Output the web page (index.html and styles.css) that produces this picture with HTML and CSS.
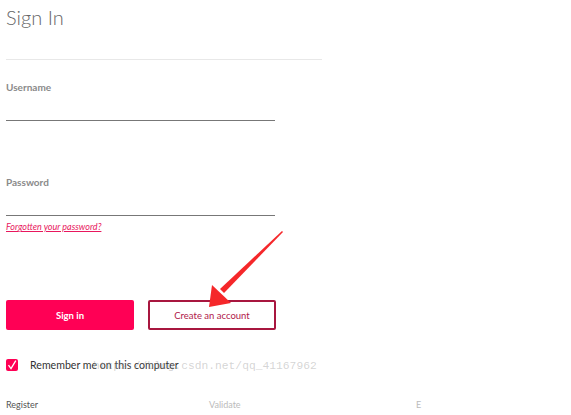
FILE: index.html
```html
<!DOCTYPE html>
<html lang="en">
<head>
    <meta charset="UTF-8">
    <meta name="viewport" content="width=device-width, initial-scale=1.0">
    <title>Sign In</title>
    <link rel="stylesheet" href="styles.css">
</head>
<body>
    <div class="page">
        <div class="header">
            <h1>Sign In</h1>
        </div>

        <form class="login-form">
            <label class="field-label" for="username">Username</label>
            <input type="text" id="username" class="field-input">

            <label class="field-label password-label" for="password">Password</label>
            <input type="password" id="password" class="field-input">

            <a href="#" class="forgot-link">Forgotten your password?</a>

            <div class="actions">
                <button type="button" class="btn btn-primary">Sign in</button>
                <button type="button" class="btn btn-outline">Create an account</button>
            </div>

            <div class="remember">
                <span class="checkbox">
                    <svg width="12" height="12" viewBox="0 0 12 12">
                        <path d="M2.5 6.2 L5 9.6 L9.8 1.6" fill="none" stroke="#fff" stroke-width="1.3"/>
                    </svg>
                </span>
                <span class="remember-text">Remember me on this computer</span>
            </div>
        </form>

        <div class="steps">
            <span class="step step-active">Register</span>
            <span class="step step-mid">Validate</span>
            <span class="step step-last">E</span>
        </div>
    </div>

    <!-- annotation layered over the screenshot -->
    <svg class="arrow" width="571" height="415" viewBox="0 0 571 415">
        <polygon points="282,231 283,232 224,293 220,289" fill="#f5272a"/>
        <polygon points="209,307 212,285 231,303" fill="#f5272a"/>
    </svg>
    <div class="watermark">https://blog.csdn.net/qq_41167962</div>
</body>
</html>
```

FILE: styles.css
```css
body {
    margin: 0;
    font-family: Lato, "Open Sans", sans-serif;
    background-color: #fff;
    width: 571px;
    height: 415px;
    overflow: hidden;
}

.page {
    padding-left: 6px;
}

.header {
    width: 316px;
    height: 59px;
    border-bottom: 1.5px solid #e8e8e8;
}

h1 {
    margin: 0;
    padding-top: 3px;
    font-size: 20px;
    line-height: 28px;
    font-weight: 300;
    color: #666;
}

.login-form {
    display: flex;
    flex-direction: column;
    align-items: flex-start;
    padding-top: 20px;
}

.field-label {
    font-size: 10px;
    line-height: 14px;
    font-weight: 700;
    color: #8a8a8a;
}

.password-label {
    margin-top: 54px;
}

.field-input {
    width: 269px;
    height: 26px;
    box-sizing: content-box;
    margin: 0;
    padding: 0;
    border: none;
    border-bottom: 1px solid #777;
    outline: none;
}

.forgot-link {
    margin-top: 5px;
    font-size: 9px;
    line-height: 12px;
    font-style: italic;
    color: #e8175d;
}

.actions {
    display: flex;
    gap: 14px;
    margin-top: 67px;
}

.btn {
    width: 128px;
    height: 30px;
    font-family: Lato, sans-serif;
    font-size: 9.5px;
    border-radius: 2px;
    cursor: pointer;
}

.btn-primary {
    background-color: #ff0055;
    border: none;
    color: #fff;
    font-weight: 700;
}

.btn-outline {
    background-color: #fff;
    border: 2px solid #a8163f;
    color: #b0174a;
}

.remember {
    display: flex;
    align-items: center;
    gap: 12px;
    margin-top: 29px;
}

.checkbox {
    display: flex;
    width: 12px;
    height: 12px;
    background-color: #ff0055;
    border-radius: 2px;
}

.remember-text {
    font-size: 10.6px;
    color: #333;
}

.steps {
    display: flex;
    margin-top: 28px;
    font-size: 9px;
}

.step-active {
    width: 203px;
    color: #555;
}

.step-mid {
    width: 207px;
    color: #bbb;
}

.step-last {
    color: #bbb;
}

.arrow {
    position: absolute;
    top: 0;
    left: 0;
    pointer-events: none;
}

.watermark {
    position: absolute;
    left: 93px;
    top: 360px;
    font-family: "Liberation Mono", monospace;
    font-size: 11.3px;
    color: rgba(160, 160, 160, 0.45);
    pointer-events: none;
}
```
